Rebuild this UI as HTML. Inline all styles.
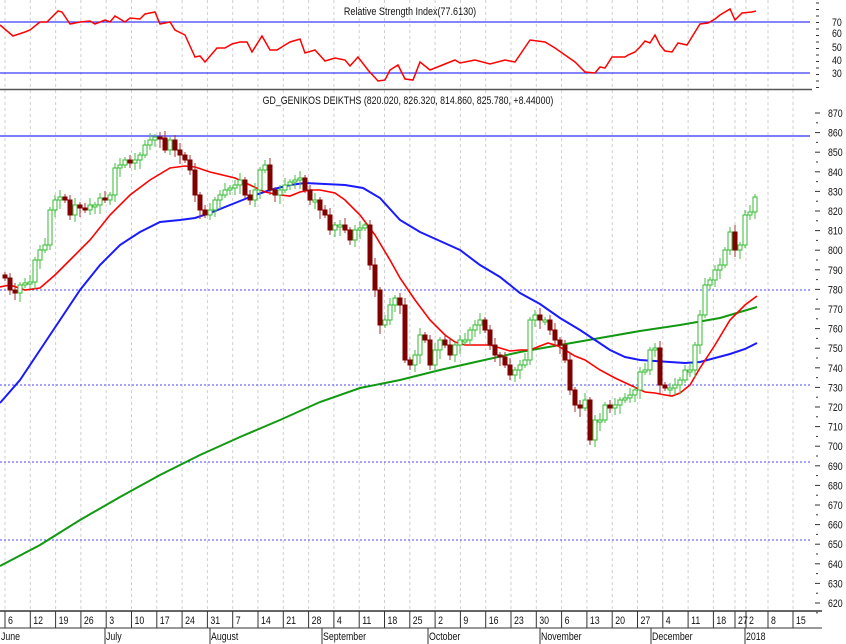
<!DOCTYPE html>
<html><head><meta charset="utf-8"><style>
html,body{margin:0;padding:0;background:#fff;width:846px;height:644px;overflow:hidden}
svg{display:block}
text{font-family:"Liberation Sans",sans-serif;font-size:11px;fill:#111}
</style></head><body>
<svg id="s" width="846" height="644" viewBox="0 0 846 644" xmlns="http://www.w3.org/2000/svg">
<g id="grid"></g>
<line x1="0" y1="22" x2="810" y2="22" stroke="#3a3aff" stroke-width="1.3"/>
<line x1="0" y1="73" x2="810" y2="73" stroke="#3a3aff" stroke-width="1.3"/>
<line x1="0" y1="89.5" x2="812" y2="89.5" stroke="#555" stroke-width="1.5"/>
<line x1="0" y1="136" x2="810" y2="136" stroke="#5050ff" stroke-width="1.5"/>
<g stroke="#4848ff" stroke-width="1" stroke-dasharray="2,2">
<line x1="0" y1="290" x2="810" y2="290"/><line x1="0" y1="385" x2="810" y2="385"/>
<line x1="0" y1="462" x2="810" y2="462"/><line x1="0" y1="540" x2="810" y2="540"/>
</g>
<text x="410" y="15" text-anchor="middle" transform="translate(410,0) scale(0.82,1) translate(-410,0)">Relative Strength Index(77.6130)</text>
<text x="408" y="104" text-anchor="middle" transform="translate(408,0) scale(0.8,1) translate(-408,0)">GD_GENIKOS DEIKTHS (820.020, 826.320, 814.860, 825.780, +8.44000)</text>
<polyline fill="none" stroke="#f00" stroke-width="1.5" points="0,25 13,36 25,32 30,30 40,22 47,22 58,11 62,12 70,24 80,22 90,21 95,24 105,20 110,22 115,16 125,22 130,18 140,19 145,14 155,12 160,24 170,22 175,30 185,35 195,57 200,56 205,62 217,48 225,48 232,44 240,42 247,42 252,52 262,36 270,50 277,50 285,45 290,42 300,39 305,53 315,50 325,61 335,58 345,60 350,66 358,57 368,70 378,81 385,80 390,70 398,65 405,79 413,80 420,62 430,70 440,66 455,60 460,63 475,60 490,64 505,60 515,62 530,40 545,42 555,48 565,55 575,62 585,72 595,73 600,67 605,68 612,57 625,57 628,55 635,52 640,47 645,41 650,43 655,35 660,45 665,51 672,52 678,43 687,45 695,32 700,24 708,23 715,19 720,15 730,9 735,20 742,13 752,12 756,11"/>
<polyline fill="none" stroke="#119911" stroke-width="2" points="0,566 40,545 80,520 120,497 160,475 200,455 240,437 280,420 320,402 360,388 400,380 440,370 480,361 520,352 560,345 600,338 640,331 680,325 720,318 757,307"/>
<polyline fill="none" stroke="#1a1aff" stroke-width="2" points="0,403 20,380 40,350 60,320 80,290 100,265 120,245 140,232 160,222 180,220 195,218 210,213 230,205 250,197 270,190 290,185 305,183 325,184 345,185 363,188 380,198 400,220 420,232 440,241 460,250 480,265 500,277 520,293 540,304 560,318 580,330 595,340 610,350 625,357 640,360 655,361 670,362 685,363 700,362 715,358 730,354 745,349 757,343"/>
<polyline fill="none" stroke="#f00" stroke-width="1.6" points="0,287 10,285 25,290 40,288 55,275 70,260 90,240 110,215 130,195 150,180 170,168 185,166 195,167 210,172 235,178 250,185 265,192 280,195 290,196 300,192 310,190 320,190 335,193 345,200 360,215 375,235 390,260 400,278 415,300 430,320 445,335 455,342 465,345 480,345 490,345 500,348 510,351 520,350 530,350 540,346 548,343 558,346 565,350 575,356 585,360 600,370 615,378 630,385 645,392 655,393 665,395 672,396 680,393 690,385 700,368 715,345 730,320 745,305 757,296"/>
<g id="candles"></g>
<g id="axis"></g>
<line x1="0" y1="611" x2="822" y2="611" stroke="#333" stroke-width="1.5"/>
<line x1="0" y1="628" x2="822" y2="628" stroke="#333" stroke-width="1"/>
</svg>
<script>
(function(){
var NS="http://www.w3.org/2000/svg";
function el(p,t,a,txt){var e=document.createElementNS(NS,t);for(var k in a)e.setAttribute(k,a[k]);if(txt!=null)e.textContent=txt;p.appendChild(e);return e;}
var grid=document.getElementById('grid'),ax=document.getElementById('axis'),cg=document.getElementById('candles');
var wk=["6","12","19","26","3","10","17","24","31","7","14","21","28","4","11","18","25","2","9","16","23","30","6","13","20","27","4","11","18"];
for(var i=0;i<wk.length;i++){var x=5+25.3*i;
 el(grid,'line',{x1:x,y1:0,x2:x,y2:611,stroke:'#cfcfcf','stroke-dasharray':'3,3'});
 el(ax,'line',{x1:x,y1:611,x2:x,y2:628,stroke:'#333'});
 el(ax,'text',{x:x+3,y:624,transform:'translate('+(x+3)+',0) scale(0.8,1) translate('+(-(x+3))+',0)'},wk[i]);}
[[735,"27"],[746,"2"],[768,"8"],[793,"15"]].forEach(function(a){var x=a[0];
 el(grid,'line',{x1:x,y1:0,x2:x,y2:611,stroke:'#cfcfcf','stroke-dasharray':'3,3'});
 el(ax,'line',{x1:x,y1:611,x2:x,y2:628,stroke:'#333'});
 el(ax,'text',{x:x+3,y:624,transform:'translate('+(x+3)+',0) scale(0.8,1) translate('+(-(x+3))+',0)'},a[1]);});
[[0,"June"],[105,"July"],[210,"August"],[322,"September"],[428,"October"],[540,"November"],[651,"December"],[745,"2018"]].forEach(function(m){
 if(m[0]>0)el(ax,'line',{x1:m[0],y1:628,x2:m[0],y2:644,stroke:'#333'});
 el(ax,'text',{x:m[0]+1,y:640,transform:'translate('+(m[0]+1)+',0) scale(0.8,1) translate('+(-(m[0]+1))+',0)'},m[1]);});
[[70,22],[60,33],[50,47],[40,60],[30,73]].forEach(function(r){el(ax,'text',{x:832,y:r[1]+4,transform:'translate(832,0) scale(0.8,1) translate(-832,0)'},r[0]);});
for(var y=3;y<88;y+=6.5)el(ax,'line',{x1:816,y1:y,x2:819,y2:y,stroke:'#333'});
for(var p=870;p>=620;p-=10){var yy=113+(870-p)*1.96;
 el(ax,'line',{x1:815,y1:yy,x2:820,y2:yy,stroke:'#333'});el(ax,'line',{x1:816,y1:yy+9.8,x2:818,y2:yy+9.8,stroke:'#333'});
 el(ax,'text',{x:828,y:yy+4,transform:'translate(828,0) scale(0.8,1) translate(-828,0)'},p);}
var c=[278,290,293,285,283,282,260,250,245,210,200,197,200,215,205,208,210,205,205,198,200,195,168,165,160,163,160,155,145,140,137,138,150,140,150,155,160,170,195,210,215,210,200,195,190,188,185,180,195,200,190,170,165,190,195,190,185,182,180,178,190,200,200,210,215,230,225,225,230,240,230,228,225,265,290,325,320,305,298,305,360,365,355,335,340,365,350,340,345,355,345,340,340,330,325,320,330,345,355,357,365,375,370,365,360,320,315,320,320,330,340,345,360,390,405,408,400,440,420,420,405,408,405,400,398,395,390,372,370,350,348,385,388,388,385,380,370,370,345,315,285,280,270,265,250,232,250,245,215,212,197];
var prev=275;
for(var j=0;j<c.length;j++){var cx=5+j*5,o=prev,cl=c[j];var tp=Math.min(o,cl),bt=Math.max(o,cl);if(bt-tp<2){bt=tp+2;}
 var up=cl<=o;var col=up?'#33bb33':'#800000';
 el(cg,'line',{x1:cx,y1:tp-3-(j%3)*2,x2:cx,y2:bt+3+(j%4)*2,stroke:up?'#44bb44':'#aa3333','stroke-width':1});
 el(cg,'rect',{x:cx-2,y:tp,width:4,height:bt-tp,fill:up?'#fff':'#800000',stroke:col,'stroke-width':1});
 prev=cl;}
})();
</script>
</body></html>
